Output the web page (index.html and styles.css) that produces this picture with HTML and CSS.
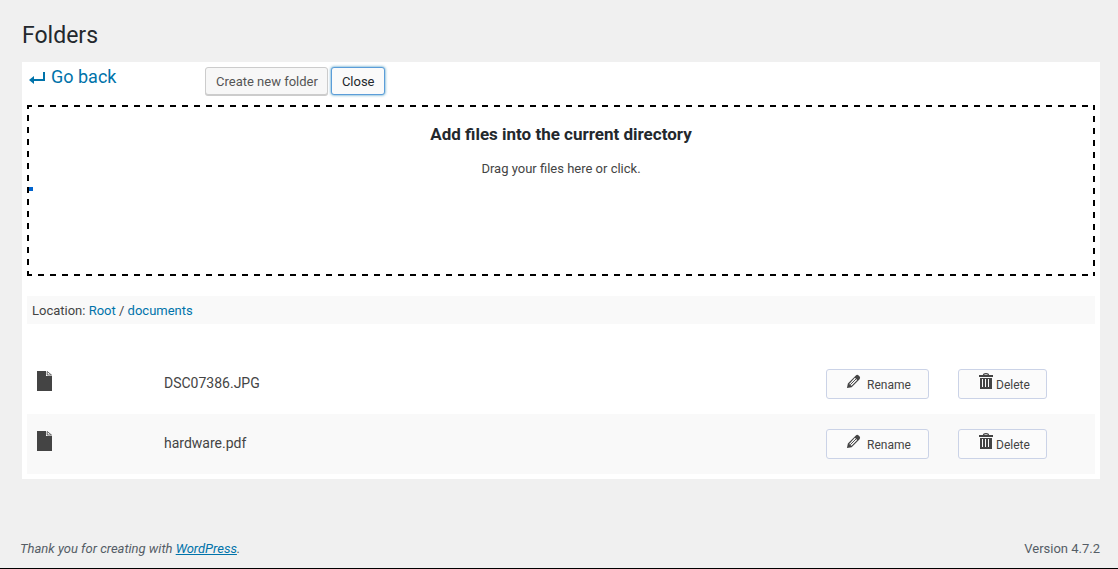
FILE: index.html
```html
<!DOCTYPE html>
<html lang="en">
<head>
<meta charset="utf-8">
<title>Folders</title>
<link rel="stylesheet" href="styles.css">
</head>
<body>
<svg class="sprite" aria-hidden="true">
  <symbol id="file" viewBox="0 0 16 20"><path d="M1 0h9v5h6v15H1z"/><path d="M11.200 0.500L15.500 4H11.200z" fill="none" stroke="currentColor" stroke-width=".8"/></symbol>
  <symbol id="pencil" viewBox="0 0 16 16"><path fill-rule="evenodd" d="M1 15l1-5L10.500 1.500Q12 .3 13.500 1.600L14.400 2.500Q15.700 4 14.500 5.500L6 14zM3.200 10.800L4.200 11l.8 1 .9.600 6-6.300-2.400-2.400z"/><path d="M4.500 11.500l6.300-6.300" fill="none" stroke="currentColor" stroke-width="1"/></symbol>
  <symbol id="trash" viewBox="0 0 14 16"><path fill-rule="evenodd" d="M1 5h12v11H1zM3 6v8h1V6zM6 6v8h1V6zM9 6v8h1V6z"/><path d="M0 2h14v2H0z"/><path d="M4.500 2Q4.500.6 7 .6T9.500 2" fill="none" stroke="currentColor" stroke-width="1.200"/></symbol>
</svg>
<div class="page">
  <main>
    <h1 class="title">Folders</h1>
    <div class="panel">
      <div class="toolbar">
        <a class="back" href="#"><svg class="back-icon" viewBox="0 0 16 12" aria-hidden="true"><path d="M14 0h2v9H5v3L0 8l5-4v3h9z"/></svg>Go back</a>
        <button class="button" type="button">Create new folder</button>
        <button class="button focused" type="button">Close</button>
      </div>
      <section class="dropzone">
        <h2 class="drop-title">Add files into the current directory</h2>
        <p class="drop-text">Drag your files here or click.</p>
        <span class="progress"></span>
      </section>
      <nav class="location">Location: <a href="#">Root</a> / <a href="#">documents</a></nav>
      <table class="files">
        <tr>
          <td class="kind"><svg class="file-icon" aria-hidden="true"><use href="#file"/></svg></td>
          <td class="name">DSC07386.JPG</td>
          <td class="action"><button class="row-button rename" type="button"><svg class="pencil-icon" aria-hidden="true"><use href="#pencil"/></svg><span>Rename</span></button></td>
          <td class="action last"><button class="row-button delete" type="button"><svg class="trash-icon" aria-hidden="true"><use href="#trash"/></svg><span>Delete</span></button></td>
        </tr>
        <tr>
          <td class="kind"><svg class="file-icon" aria-hidden="true"><use href="#file"/></svg></td>
          <td class="name">hardware.pdf</td>
          <td class="action"><button class="row-button rename" type="button"><svg class="pencil-icon" aria-hidden="true"><use href="#pencil"/></svg><span>Rename</span></button></td>
          <td class="action last"><button class="row-button delete" type="button"><svg class="trash-icon" aria-hidden="true"><use href="#trash"/></svg><span>Delete</span></button></td>
        </tr>
      </table>
    </div>
  </main>
  <footer class="footer">
    <em>Thank you for creating with <a href="#">WordPress</a>.</em>
    <span>Version 4.7.2</span>
  </footer>
</div>
</body>
</html>
```
FILE: styles.css
```css
* { box-sizing: border-box; }
body {
  margin: 0;
  background: #f0f0f0;
  color: #444;
  font: 13px/20px Roboto, sans-serif;
}
svg { fill: currentColor; }
a { color: #0073aa; }
.sprite { position: absolute; width: 0; height: 0; }
.page {
  display: flex;
  flex-direction: column;
  justify-content: space-between;
  min-height: 100vh;
  padding: 20px 18px 9px 20px;
  border-bottom: 1px solid #000;
}
main { padding-left: 2px; }
.title {
  margin: 0 0 10px;
  color: #23282d;
  font-size: 23px;
  font-weight: 400;
  line-height: 32px;
}
.panel { padding: 5px; background: #fff; }
.toolbar {
  display: flex;
  align-items: flex-start;
  gap: 3px;
  height: 38px;
}
.back {
  display: flex;
  align-items: center;
  gap: 6px;
  width: 175px;
  padding-left: 2px;
  font-size: 18px;
  text-decoration: none;
}
.back-icon { width: 16px; height: 12px; margin-top: 2px; }
.button {
  height: 28px;
  padding: 2px 9px 0 10px;
  border: 1px solid #ccc;
  border-radius: 3px;
  background: #f7f7f7;
  box-shadow: 0 1px 0 #ccc;
  color: #555;
  font: 13px/24px Roboto, sans-serif;
}
.focused {
  border-color: #5b9dd9;
  background: #fafafa;
  box-shadow: 0 0 3px rgba(0, 115, 170, .8);
  color: #23282d;
}
/* Dashed outline: 6px dashes at a 12px pitch on all four sides. */
.dropzone {
  position: relative;
  height: 171px;
  padding: 18px;
  background:
    linear-gradient(90deg, #000 50%, transparent 50%) -1px 0 / 12px 2px repeat-x,
    linear-gradient(90deg, #000 50%, transparent 50%) -1px 100% / 12px 2px repeat-x,
    linear-gradient(#000 50%, transparent 50%) 0 -2px / 2px 12px repeat-y,
    linear-gradient(#000 50%, transparent 50%) 100% -1px / 2px 12px repeat-y;
  text-align: center;
}
.drop-title {
  margin: 0 0 15px;
  color: #23282d;
  font-size: 17px;
  font-weight: 700;
  line-height: 22px;
}
.drop-text { margin: 0; line-height: 18px; }
.progress {
  position: absolute;
  left: 2px;
  top: 82px;
  width: 4px;
  height: 4px;
  background: #0063ce;
}
.location {
  margin: 20px 0 30px;
  padding: 5px 5px 3px;
  background: #f9f9f9;
}
.location a { text-decoration: none; }
.files { width: 100%; border-collapse: collapse; }
.files tr { height: 60px; }
.files tr:nth-child(even) { background: #f9f9f9; }
.files td { padding: 0; }
.kind { width: 137px; }
.files .kind { padding: 0 0 6px 9px; }
.file-icon { display: block; width: 16px; height: 20px; }
.name { font-size: 14px; }
.files .name { padding-bottom: 2px; }
.action { width: 132px; }
.last { width: 137px; }
.row-button {
  display: flex;
  align-items: flex-start;
  height: 30px;
  border: 1px solid #cbd3e7;
  border-radius: 3px;
  background: #fbfbfb;
  color: #444;
  font: 12px/28px Roboto, sans-serif;
}
.rename { width: 103px; gap: 6px; padding: 0 0 0 19px; }
.delete { width: 89px; gap: 3px; padding: 0 0 0 20px; }
.row-button span { padding-top: 1px; }
.pencil-icon { width: 15px; height: 15px; margin-top: 4px; }
.trash-icon { width: 14px; height: 16px; margin-top: 3px; }
.footer {
  display: flex;
  justify-content: space-between;
  color: #555d66;
}
```
